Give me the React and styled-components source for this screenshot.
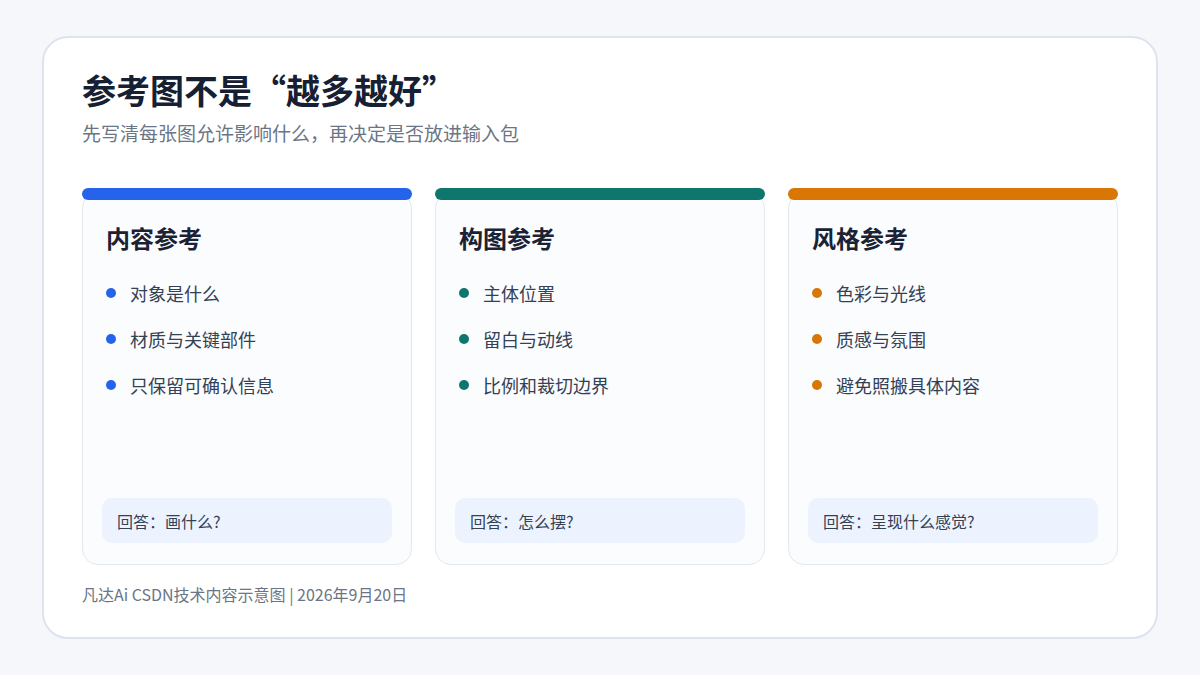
import styled, { createGlobalStyle } from "styled-components";

const CARDS = [
    {
        title: "内容参考",
        color: "#2563eb",
        items: ["对象是什么", "材质与关键部件", "只保留可确认信息"],
        answer: "回答：画什么?",
    },
    {
        title: "构图参考",
        color: "#0f766e",
        items: ["主体位置", "留白与动线", "比例和裁切边界"],
        answer: "回答：怎么摆?",
    },
    {
        title: "风格参考",
        color: "#d97706",
        items: ["色彩与光线", "质感与氛围", "避免照搬具体内容"],
        answer: "回答：呈现什么感觉?",
    },
];

const App = () => {
    return (
        <>
            <GlobalStyle />
            <Frame>
                <Title>参考图不是“越多越好”</Title>
                <Subtitle>先写清每张图允许影响什么，再决定是否放进输入包</Subtitle>
                <CardGrid>
                    {CARDS.map(card => (
                        <Card key={card.title}>
                            <TopBar $color={card.color} />
                            <CardTitle>{card.title}</CardTitle>
                            <List>
                                {card.items.map(item => (
                                    <Item key={item}>
                                        <Dot $color={card.color} />
                                        {item}
                                    </Item>
                                ))}
                            </List>
                            <Answer>{card.answer}</Answer>
                        </Card>
                    ))}
                </CardGrid>
                <Footer>凡达Ai CSDN技术内容示意图 | 2026年9月20日</Footer>
            </Frame>
        </>
    )
}

export default App;

const GlobalStyle = createGlobalStyle`
    html, body {
        margin: 0;
        padding: 0;
        background: #f5f7fb;
    }
    body {
        font-family: "Noto Sans CJK SC", "Noto Sans", sans-serif;
        color: #1a2233;
    }
    * {
        box-sizing: border-box;
    }
`

const Frame = styled.div`
    width: 1116px;
    height: 603px;
    margin: 36px auto 0;
    padding: 30px 38px 0;
    background: #ffffff;
    border: 2px solid #dde4ef;
    border-radius: 26px;
    display: flex;
    flex-direction: column;
`

const Title = styled.h1`
    margin: 0;
    font-size: 34px;
    line-height: 44px;
    font-weight: 700;
    color: #172033;
`

const Subtitle = styled.p`
    margin: 7px 0 0;
    font-size: 19px;
    line-height: 28px;
    color: #6b7585;
`

const CardGrid = styled.div`
    display: grid;
    grid-template-columns: repeat(3, 330px);
    gap: 23px;
    margin-top: 45px;
`

const Card = styled.div`
    position: relative;
    height: 373px;
    padding: 29px 19px 21px;
    background: #fbfcfe;
    border: 1px solid #e2e8f0;
    border-radius: 16px;
    display: flex;
    flex-direction: column;
`

const TopBar = styled.div`
    position: absolute;
    top: -5px;
    left: -1px;
    right: -1px;
    height: 12px;
    border-radius: 6px;
    background: ${p => p.$color};
`

const CardTitle = styled.h2`
    margin: 0 0 0 4px;
    font-size: 24px;
    line-height: 32px;
    font-weight: 700;
    color: #1a2233;
`

const List = styled.ul`
    list-style: none;
    margin: 26px 0 0 4px;
    padding: 0;
    display: flex;
    flex-direction: column;
    gap: 20px;
`

const Item = styled.li`
    display: flex;
    align-items: center;
    gap: 14px;
    font-size: 18px;
    line-height: 26px;
    color: #334155;
`

const Dot = styled.span`
    width: 10px;
    height: 10px;
    border-radius: 50%;
    flex-shrink: 0;
    background: ${p => p.$color};
`

const Answer = styled.div`
    margin-top: auto;
    height: 45px;
    padding: 0 15px;
    display: flex;
    align-items: center;
    background: #edf3fe;
    border-radius: 10px;
    font-size: 16px;
    color: #334155;
`

const Footer = styled.div`
    margin-top: 17px;
    font-size: 16px;
    line-height: 24px;
    color: #6b7585;
`
